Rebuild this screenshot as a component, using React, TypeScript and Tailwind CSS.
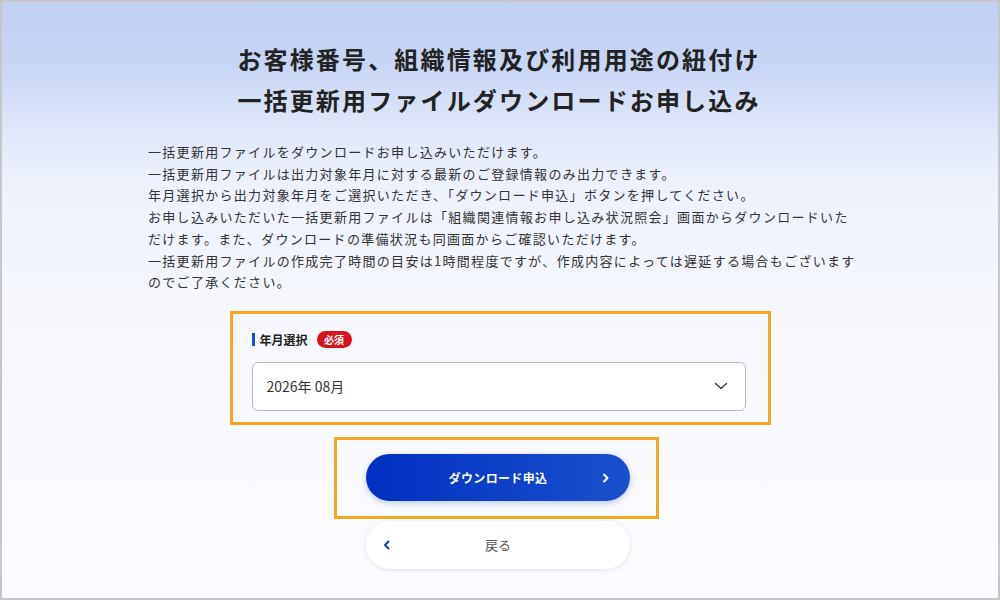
import React from "react";

const lines = [
  "一括更新用ファイルをダウンロードお申し込みいただけます。",
  "一括更新用ファイルは出力対象年月に対する最新のご登録情報のみ出力できます。",
  "年月選択から出力対象年月をご選択いただき、「ダウンロード申込」ボタンを押してください。",
  "お申し込みいただいた一括更新用ファイルは「組織関連情報お申し込み状況照会」画面からダウンロードいた",
  "だけます。また、ダウンロードの準備状況も同画面からご確認いただけます。",
  "一括更新用ファイルの作成完了時間の目安は1時間程度ですが、作成内容によっては遅延する場合もございます",
  "のでご了承ください。",
];

export default function App() {
  return (
    <div
      className="w-[1000px] h-[600px] border-2 border-[#c6c6c6] overflow-hidden flex flex-col items-center bg-[linear-gradient(180deg,#c1d1f3_0%,#c7d5f5_10%,#dce5f9_20%,#edf1fc_30%,#f5f7fd_50%,#fbfcff_100%)] font-['Noto_Sans_CJK_JP','Noto_Sans',sans-serif]"
    >
      <h1 className="mt-[36px] text-[24px] leading-[41px] font-bold text-[#222] text-center tracking-[0.09em] mr-[2px]">
        お客様番号、組織情報及び利用用途の紐付け
        <br />
        一括更新用ファイルダウンロードお申し込み
      </h1>

      <div className="mt-[21px] w-[704px] text-[13px] leading-[21.7px] tracking-[0.1em] text-[#333] whitespace-nowrap">
        {lines.map((l, i) => (
          <p key={i}>{l}</p>
        ))}
      </div>

      <div className="mt-[18px] w-[541px] border-[3px] border-[#f4a81d] pt-[17px] pb-[11px] pl-[19px]">
        <div className="flex items-center h-[18px]">
          <span className="w-[3px] h-[13px] bg-[#1a4fd0]" />
          <span className="ml-[5px] text-[12px] font-bold text-[#222] leading-[18px]">年月選択</span>
          <span className="ml-[9px] h-[17px] w-[35px] rounded-full bg-[#d7141a] text-white text-[10px] font-bold flex items-center justify-center leading-none">
            必須
          </span>
        </div>
        <div className="mt-[13px] w-[494px] h-[49px] bg-white border border-[#b5b8bf] rounded-[6px] flex items-center justify-between pl-[14px] pr-[16px]">
          <span className="text-[14px] text-[#333]">2026年 08月</span>
          <svg width="16" height="16" viewBox="0 0 16 16" fill="none">
            <polyline points="2.5,5.5 8,10.5 13.5,5.5" stroke="#444" strokeWidth="1.5" strokeLinecap="round" strokeLinejoin="round" />
          </svg>
        </div>
      </div>

      <div className="mt-[12px] w-[325px] h-[82px] border-[3px] border-[#f4a81d] flex items-center pl-[29px] mr-[7px]">
        <button className="w-[264px] h-[47px] rounded-full bg-[linear-gradient(90deg,#0030c2,#1a50cc)] shadow-[0_2px_6px_rgba(20,50,150,0.25)] relative flex items-center justify-center">
          <span className="text-white text-[12px] font-bold tracking-[0.03em]">ダウンロード申込</span>
          <svg className="absolute right-[20px] top-1/2 -translate-y-1/2" width="8" height="10" viewBox="0 0 8 10" fill="none">
            <polyline points="2,1.5 5.5,5 2,8.5" stroke="white" strokeWidth="2" strokeLinecap="round" strokeLinejoin="round" />
          </svg>
        </button>
      </div>

      <button className="mt-[2px] mr-[4px] w-[264px] h-[48px] rounded-full bg-white shadow-[0_1px_5px_rgba(0,0,0,0.1)] relative flex items-center justify-center">
        <svg className="absolute left-[17px] top-1/2 -translate-y-1/2" width="8" height="10" viewBox="0 0 8 10" fill="none">
          <polyline points="5.5,1.5 2,5 5.5,8.5" stroke="#1e3a9e" strokeWidth="2" strokeLinecap="round" strokeLinejoin="round" />
        </svg>
        <span className="text-[13px] text-[#555]">戻る</span>
      </button>
    </div>
  );
}
